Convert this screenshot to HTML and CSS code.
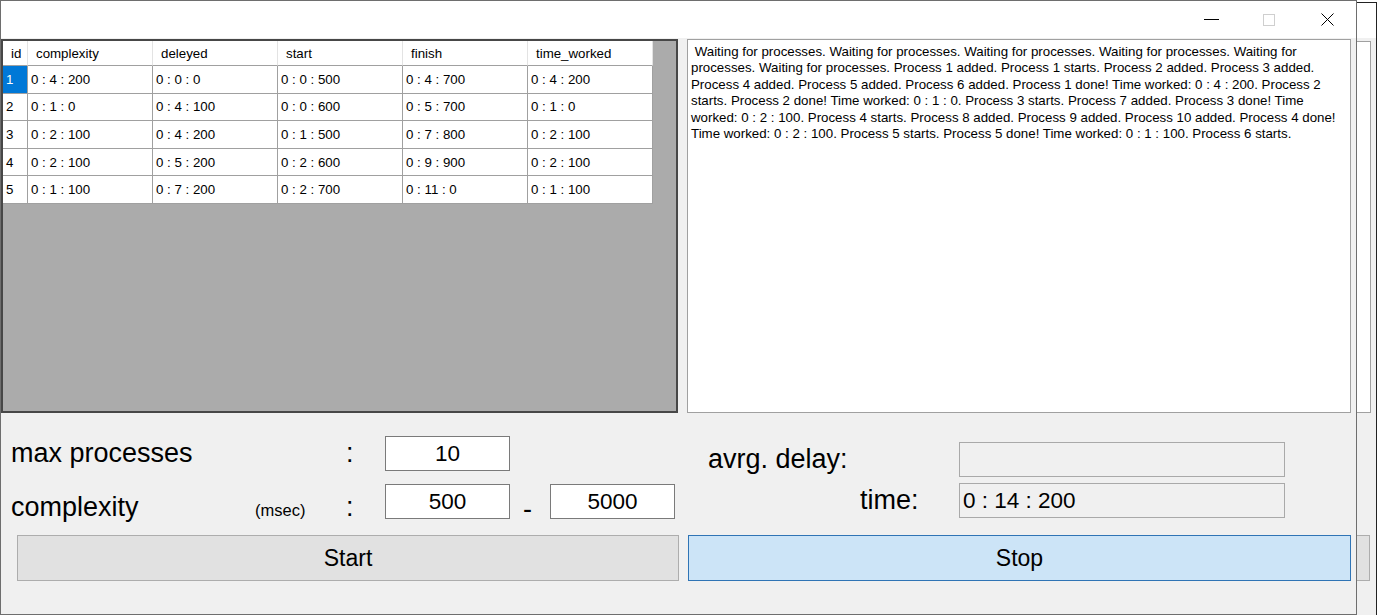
FILE: index.html
```html
<!DOCTYPE html>
<html>
<head>
<meta charset="utf-8">
<title>Processes</title>
<link rel="stylesheet" href="styles.css">
</head>
<body>
<div class="desktop">
  <div class="window back">
    <div class="titlebar back-title"></div>
    <div class="client back-client">
      <div class="back-log"></div>
      <div class="back-btn"></div>
    </div>
  </div>

  <div class="window main">
    <div class="titlebar">
      <div class="cap-btn">
        <svg width="15" height="1" viewBox="0 0 15 1"><rect width="15" height="1" fill="#000"/></svg>
      </div>
      <div class="cap-btn">
        <svg width="12" height="12" viewBox="0 0 12 12"><rect x="0.5" y="0.5" width="11" height="11" fill="none" stroke="#cfcfcf"/></svg>
      </div>
      <div class="cap-btn">
        <svg width="13" height="13" viewBox="0 0 13 13"><path d="M0.5 0.5 L12.5 12.5 M12.5 0.5 L0.5 12.5" stroke="#000" stroke-width="1" fill="none"/></svg>
      </div>
    </div>

    <div class="client">
      <div class="top-row">
        <div class="grid">
          <table class="dgv">
            <colgroup>
              <col class="c-id"><col class="c-w"><col class="c-w"><col class="c-w"><col class="c-w"><col class="c-w">
            </colgroup>
            <thead>
              <tr><th>id</th><th>complexity</th><th>deleyed</th><th>start</th><th>finish</th><th>time_worked</th></tr>
            </thead>
            <tbody>
              <tr><td class="sel">1</td><td>0 : 4 : 200</td><td>0 : 0 : 0</td><td>0 : 0 : 500</td><td>0 : 4 : 700</td><td>0 : 4 : 200</td></tr>
              <tr><td>2</td><td>0 : 1 : 0</td><td>0 : 4 : 100</td><td>0 : 0 : 600</td><td>0 : 5 : 700</td><td>0 : 1 : 0</td></tr>
              <tr><td>3</td><td>0 : 2 : 100</td><td>0 : 4 : 200</td><td>0 : 1 : 500</td><td>0 : 7 : 800</td><td>0 : 2 : 100</td></tr>
              <tr><td>4</td><td>0 : 2 : 100</td><td>0 : 5 : 200</td><td>0 : 2 : 600</td><td>0 : 9 : 900</td><td>0 : 2 : 100</td></tr>
              <tr><td>5</td><td>0 : 1 : 100</td><td>0 : 7 : 200</td><td>0 : 2 : 700</td><td>0 : 11 : 0</td><td>0 : 1 : 100</td></tr>
            </tbody>
          </table>
        </div>
        <div class="log"> Waiting for processes. Waiting for processes. Waiting for processes. Waiting for processes. Waiting for processes. Waiting for processes. Process 1 added. Process 1 starts. Process 2 added. Process 3 added. Process 4 added. Process 5 added. Process 6 added. Process 1 done! Time worked: 0 : 4 : 200. Process 2 starts. Process 2 done! Time worked: 0 : 1 : 0. Process 3 starts. Process 7 added. Process 3 done! Time worked: 0 : 2 : 100. Process 4 starts. Process 8 added. Process 9 added. Process 10 added. Process 4 done! Time worked: 0 : 2 : 100. Process 5 starts. Process 5 done! Time worked: 0 : 1 : 100. Process 6 starts.</div>
      </div>

      <div class="form">
        <div class="form-left">
          <div class="lbl span2">max processes</div>
          <div class="colon">:</div>
          <input class="tb" value="10">
          <div class="empty"></div>
          <div class="empty"></div>

          <div class="lbl low">complexity</div>
          <div class="msec">(msec)</div>
          <div class="colon low">:</div>
          <input class="tb" value="500">
          <div class="dash">-</div>
          <input class="tb" value="5000">
        </div>
        <div class="form-right">
          <div class="lbl avrg">avrg. delay:</div>
          <input class="tb ro" value="" readonly>
          <div class="lbl time">time:</div>
          <input class="tb ro left" value="0 : 14 : 200" readonly>
        </div>
      </div>

      <div class="buttons">
        <button class="btn">Start</button>
        <button class="btn focused">Stop</button>
      </div>
    </div>
  </div>
</div>
</body>
</html>
```

FILE: styles.css
```css
html, body {
  margin: 0;
  padding: 0;
}
body {
  width: 1378px;
  height: 615px;
  overflow: hidden;
  background: #ffffff;
  font-family: "Liberation Sans", Arial, sans-serif;
  color: #000;
}
.desktop {
  position: relative;
  width: 1378px;
  height: 615px;
}
.window {
  position: absolute;
  box-sizing: border-box;
  display: flex;
  flex-direction: column;
  background: #f0f0f0;
}
.main {
  left: 0;
  top: 0;
  width: 1357px;
  height: 615px;
  border: 1px solid #6e6e6e;
  z-index: 2;
}
.back {
  left: 1200px;
  top: 2px;
  width: 177px;
  height: 613px;
  border-top: 1px solid #222;
  border-right: 1px solid #222;
  z-index: 1;
}
.titlebar {
  flex: none;
  height: 37px;
  background: #fff;
  display: flex;
  justify-content: flex-end;
}
.back-title {
  height: 35px;
}
.cap-btn {
  width: 58px;
  height: 37px;
  display: flex;
  align-items: center;
  justify-content: center;
}
.cap-btn svg {
  display: block;
}

.client {
  flex: 1;
  display: flex;
  flex-direction: column;
  min-height: 0;
}

/* back window sliver */
.back-client {
  align-items: flex-end;
}
.back-log {
  width: 150px;
  height: 372px;
  margin-top: 3px;
  margin-right: 5px;
  box-sizing: border-box;
  background: #fff;
  border: 1px solid #a0a0a0;
}
.back-btn {
  width: 150px;
  height: 46px;
  margin-top: 122px;
  margin-right: 6px;
  box-sizing: border-box;
  background: #e1e1e1;
  border: 1px solid #adadad;
}

/* top row */
.top-row {
  flex: none;
  display: flex;
  gap: 9px;
  margin-top: 1px;
  height: 374px;
}
.grid {
  width: 677px;
  height: 374px;
  box-sizing: border-box;
  border: 2px solid #474747;
  background: #ababab;
  overflow: hidden;
}
.dgv {
  table-layout: fixed;
  border-collapse: separate;
  border-spacing: 0;
  width: 650px;
  font-size: 13.3px;
}
.c-id { width: 25px; }
.c-w { width: 125px; }
.dgv th, .dgv td {
  box-sizing: border-box;
  background: #fff;
  white-space: nowrap;
  overflow: hidden;
  text-align: left;
  vertical-align: middle;
  font-weight: normal;
}
.dgv th {
  height: 25px;
  padding: 0 0 0 8px;
  border-right: 1px solid #e3e3e3;
  border-bottom: 1px solid #a0a0a0;
}
.dgv td {
  height: 27.6px;
  padding: 0 0 0 3px;
  border-right: 1px solid #a0a0a0;
  border-bottom: 1px solid #a0a0a0;
}
.dgv td.sel {
  background: #0078d7;
  color: #fff;
}

.log {
  width: 664px;
  height: 374px;
  box-sizing: border-box;
  background: #fff;
  border: 1px solid #a0a0a0;
  padding: 4px 3px 3px;
  font-size: 13.3px;
  line-height: 16.4px;
  white-space: pre-wrap;
  overflow: hidden;
}

/* form */
.form {
  flex: none;
  height: 122px;
  display: flex;
}
.form-left {
  width: 686px;
  box-sizing: border-box;
  padding: 23px 0 0 10px;
  display: grid;
  grid-template-columns: 244px 86px 44px 125px 40px 125px;
  grid-template-rows: 35px 35px;
  row-gap: 13px;
  align-content: start;
}
.form-right {
  width: 598px;
  box-sizing: border-box;
  padding-top: 29px;
  display: grid;
  grid-template-columns: 272px 326px;
  grid-template-rows: 35px 35px;
  row-gap: 6px;
  align-content: start;
}
.lbl {
  font-size: 27px;
  line-height: 35px;
  white-space: nowrap;
}
.span2 {
  grid-column: span 2;
}
.low {
  padding-top: 6px;
}
.msec {
  font-size: 16.5px;
  line-height: 35px;
  padding-top: 9px;
}
.colon {
  font-size: 27px;
  line-height: 35px;
  padding-left: 5px;
}
.dash {
  font-size: 27px;
  line-height: 35px;
  padding-left: 13px;
  padding-top: 8px;
}
.tb {
  width: 125px;
  height: 35px;
  box-sizing: border-box;
  margin: 0;
  padding: 0;
  border: 1px solid #7a7a7a;
  background: #fff;
  font-family: "Liberation Sans", Arial, sans-serif;
  font-size: 22.5px;
  color: #000;
  text-align: center;
  outline: none;
}
.tb.ro {
  width: 326px;
  background: #f0f0f0;
  border-color: #a9a9a9;
}
.tb.left {
  text-align: left;
  padding-left: 3px;
}
.avrg {
  padding-left: 21px;
}
.time {
  padding-left: 173px;
}

/* buttons */
.buttons {
  flex: none;
  display: flex;
  gap: 9px;
  padding-left: 16px;
  height: 46px;
}
.btn {
  box-sizing: border-box;
  height: 46px;
  width: 662px;
  margin: 0;
  padding: 0;
  background: #e1e1e1;
  border: 1px solid #adadad;
  font-family: "Liberation Sans", Arial, sans-serif;
  font-size: 23px;
  color: #000;
}
.btn.focused {
  width: 663px;
  background: #cce4f7;
  border-color: #2f74b5;
}
```
